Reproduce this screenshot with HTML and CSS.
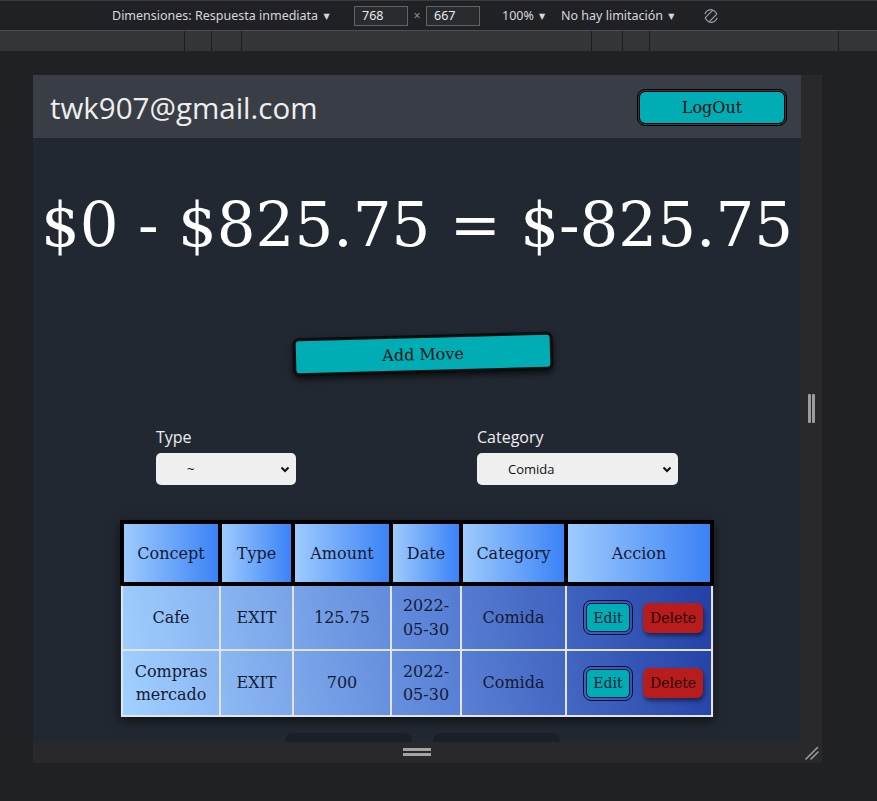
FILE: index.html
```html
<!DOCTYPE html>
<html lang="es">
<head>
<meta charset="utf-8">
<title>Moves</title>
<link rel="stylesheet" href="styles.css">
</head>
<body>
<div class="toolbar">
  <span class="tb-dim">Dimensiones: Respuesta inmediata <span class="caret">▼</span></span>
  <span class="tb-input">768</span>
  <span class="tb-x">×</span>
  <span class="tb-input">667</span>
  <span class="tb-zoom">100% <span class="caret">▼</span></span>
  <span class="tb-throttle">No hay limitación <span class="caret">▼</span></span>
  <svg class="tb-rotate" width="16" height="16" viewBox="0 0 16 16" fill="none" stroke="#9aa0a6" stroke-width="1.2">
    <rect x="5.2" y="2.2" width="5.6" height="11.6" rx="1" transform="rotate(45 8 8)"/>
    <path d="M1.8 6.2 A6.4 6.4 0 0 1 9.6 1.8"/>
    <path d="M14.2 9.8 A6.4 6.4 0 0 1 6.4 14.2"/>
  </svg>
</div>
<div class="ruler">
  <div class="seg s1"></div><div class="seg s2"></div><div class="seg s3"></div><div class="seg s4"></div><div class="seg s5"></div><div class="seg s6"></div><div class="seg s7"></div><div class="seg s8"></div>
</div>
<div class="stage">
  <div class="device">
    <div class="viewport">
      <header class="topbar">
        <span class="email">twk907@gmail.com</span>
        <button class="btn-logout">LogOut</button>
      </header>
      <h1 class="balance">$0 - $825.75 = $-825.75</h1>
      <div class="actions">
        <button class="btn-add">Add Move</button>
      </div>
      <div class="filters">
        <div class="field field-type">
          <label class="field-label">Type</label>
          <div class="select-wrap">
            <select class="select"><option>~</option></select>
            <svg class="chev" width="10" height="7" viewBox="0 0 10 7"><path d="M1.5 1.5 L5 5 L8.5 1.5" fill="none" stroke="#111" stroke-width="2"/></svg>
          </div>
        </div>
        <div class="field field-cat">
          <label class="field-label">Category</label>
          <div class="select-wrap">
            <select class="select"><option>Comida</option></select>
            <svg class="chev" width="10" height="7" viewBox="0 0 10 7"><path d="M1.5 1.5 L5 5 L8.5 1.5" fill="none" stroke="#111" stroke-width="2"/></svg>
          </div>
        </div>
      </div>
      <table class="moves">
        <colgroup>
          <col class="c1"><col class="c2"><col class="c3"><col class="c4"><col class="c5"><col class="c6">
        </colgroup>
        <thead>
          <tr><th>Concept</th><th>Type</th><th>Amount</th><th>Date</th><th>Category</th><th>Accion</th></tr>
        </thead>
        <tbody>
          <tr>
            <td>Cafe</td><td>EXIT</td><td>125.75</td><td>2022-05-30</td><td>Comida</td>
            <td><div class="row-actions"><button class="btn-edit">Edit</button><button class="btn-delete">Delete</button></div></td>
          </tr>
          <tr>
            <td>Compras mercado</td><td>EXIT</td><td>700</td><td>2022-05-30</td><td>Comida</td>
            <td><div class="row-actions"><button class="btn-edit">Edit</button><button class="btn-delete">Delete</button></div></td>
          </tr>
        </tbody>
      </table>
      <div class="pager">
        <div class="pager-btn"></div>
        <div class="pager-btn"></div>
      </div>
    </div>
    <div class="side">
      <div class="vgrip"><span></span><span></span></div>
    </div>
    <div class="bottom">
      <div class="bottom-main"><div class="hgrip"><span></span><span></span></div></div>
      <div class="bottom-corner">
        <svg width="14" height="14" viewBox="0 0 14 14" stroke="#9a9a9a" stroke-width="1.6" stroke-linecap="round">
          <path d="M1 13 L12.5 1.5"/>
          <path d="M6 13 L13 6"/>
        </svg>
      </div>
    </div>
  </div>
</div>
</body>
</html>
```

FILE: styles.css
```css
* { box-sizing: border-box; }

body {
  margin: 0;
  width: 877px;
  height: 801px;
  overflow: hidden;
  background: #202124;
  font-family: "Noto Sans", "Open Sans", sans-serif;
}

/* ---------- devtools toolbar ---------- */
.toolbar {
  height: 30px;
  border-top: 1px solid #3a3b3e;
  background: #202124;
  display: flex;
  align-items: center;
  padding-left: 112px;
  font-size: 12.5px;
  color: #d6d7da;
}
.caret {
  font-family: "DejaVu Sans", sans-serif;
  font-size: 8px;
  color: #d6d7da;
  margin-left: 2px;
  position: relative;
  top: -1px;
}
.tb-dim { width: 242px; white-space: nowrap; }
.tb-input {
  width: 54px;
  height: 20px;
  border: 1px solid #5f6368;
  background: #2a2b2e;
  color: #e8eaed;
  padding-left: 7px;
  line-height: 18px;
}
.tb-x {
  width: 18px;
  text-align: center;
  color: #8a8d91;
}
.tb-zoom { margin-left: 22px; width: 59px; white-space: nowrap; }
.tb-throttle { width: 142px; white-space: nowrap; }
.tb-rotate { display: block; }

.ruler {
  height: 21px;
  border-top: 1px solid #4d4e52;
  background: #343538;
  display: flex;
}
.seg { height: 100%; border-right: 1px solid #1c1d1f; }
.s1 { width: 185px; }
.s2 { width: 27px; }
.s3 { width: 30px; }
.s4 { width: 350px; }
.s5 { width: 31px; }
.s6 { width: 27px; }
.s7 { width: 189px; }
.s8 { flex: 1; border-right: none; }

/* ---------- device frame ---------- */
.stage { padding: 24px 0 0 33px; }
.device {
  display: grid;
  grid-template-columns: 768px 21px;
  grid-template-rows: 667px 21px;
}
.side {
  background: #29292c;
  display: flex;
  align-items: center;
  justify-content: center;
}
.vgrip { display: flex; gap: 1px; }
.vgrip span {
  width: 3px;
  height: 29px;
  background: #9c9c9c;
  border-radius: 1px;
}
.bottom {
  grid-column: 1 / 3;
  background: #29292c;
  display: flex;
}
.bottom-main {
  width: 768px;
  display: flex;
  align-items: center;
  justify-content: center;
}
.hgrip {
  display: flex;
  flex-direction: column;
  gap: 2px;
  margin-top: -1px;
}
.hgrip span {
  width: 28px;
  height: 3px;
  background: #a4a4a4;
}
.bottom-corner {
  width: 21px;
  display: flex;
  align-items: center;
  justify-content: center;
}
.bottom-corner svg { display: block; }

/* ---------- app page ---------- */
.viewport {
  background: #222831;
  overflow: hidden;
  font-family: "DejaVu Serif", serif;
}
.topbar {
  height: 63px;
  background: #393e46;
  display: flex;
  align-items: center;
  justify-content: space-between;
  padding: 0 14px 0 17px;
}
.email {
  font-family: "Open Sans", sans-serif;
  font-size: 29.5px;
  color: #eeeeee;
  position: relative;
  top: 1px;
}
.btn-logout {
  width: 150px;
  height: 37px;
  background: #00adb5;
  background-clip: padding-box;
  border: 3px double #000;
  border-radius: 8px;
  font-family: "DejaVu Serif", serif;
  font-size: 16px;
  color: #111;
  position: relative;
  top: 1px;
}

.balance {
  margin: 0;
  height: 174px;
  line-height: 174px;
  text-align: center;
  font-weight: normal;
  font-size: 61px;
  color: #ffffff;
  white-space: nowrap;
}

.actions {
  padding-top: 23px;
  display: flex;
  justify-content: center;
}
.btn-add {
  width: 260px;
  height: 38px;
  margin-left: 12px;
  background: #00adb5;
  border: 3px solid #0b0c0e;
  border-radius: 6px;
  box-shadow: 0 3px 6px rgba(0, 0, 0, 0.7);
  transform: rotate(-1.5deg);
  font-family: "DejaVu Serif", serif;
  font-size: 16px;
  color: #111;
}

.filters {
  margin-top: 54px;
  padding-left: 123px;
  display: flex;
  gap: 181px;
}
.field { display: flex; flex-direction: column; gap: 6px; }
.field-type { width: 140px; }
.field-cat { width: 201px; }
.field-label {
  font-family: "Open Sans", sans-serif;
  font-size: 16px;
  line-height: 20px;
  color: #eeeeee;
}
.select-wrap { position: relative; }
.select {
  -webkit-appearance: none;
  appearance: none;
  width: 100%;
  height: 32px;
  border: none;
  border-radius: 5px;
  background: #efefef;
  padding-left: 31px;
  font-family: "Open Sans", sans-serif;
  font-size: 13px;
  color: #111;
}
.chev {
  position: absolute;
  right: 6px;
  top: 13px;
}

/* ---------- table ---------- */
.moves {
  margin: 35px auto 0;
  width: 590px;
  table-layout: fixed;
  border-collapse: collapse;
  box-shadow: 0 4px 10px rgba(0, 0, 0, 0.55);
  color: #141a33;
  font-size: 16px;
}
.c1 { width: 98px; }
.c2 { width: 73px; }
.c3 { width: 98px; }
.c4 { width: 70px; }
.c5 { width: 105px; }
.c6 { width: 146px; }

.moves th {
  height: 62px;
  padding: 0;
  border: 4px solid #000;
  background: linear-gradient(to right, #9ecbfd, #3b82f6);
  font-weight: normal;
}
.moves tbody {
  background: linear-gradient(80deg, #a2d0ff 0%, #5f88da 50%, #2340a6 100%);
}
.moves td {
  height: 66px;
  padding: 0 4px;
  border: 2px solid #e2e4ea;
  text-align: center;
  line-height: 1.45;
}
.row-actions {
  display: flex;
  justify-content: center;
  align-items: center;
  gap: 10px;
  padding-left: 8px;
}
.btn-edit {
  width: 50px;
  height: 35px;
  padding: 0;
  background: #00adb5;
  background-clip: padding-box;
  border: 4px double #0e1236;
  border-radius: 8px;
  font-family: "DejaVu Serif", serif;
  font-size: 14px;
  color: #141a33;
}
.btn-delete {
  width: 60px;
  height: 30px;
  padding: 0;
  background: #b91c1c;
  border: none;
  border-radius: 6px;
  box-shadow: 1px 3px 4px rgba(0, 0, 0, 0.5);
  font-family: "DejaVu Serif", serif;
  font-size: 14px;
  color: #2a0707;
}

.pager {
  margin-top: 16px;
  padding-left: 252px;
  display: flex;
  gap: 21px;
}
.pager-btn {
  width: 127px;
  height: 40px;
  border-radius: 8px;
  background: #1b1f27;
}
```
